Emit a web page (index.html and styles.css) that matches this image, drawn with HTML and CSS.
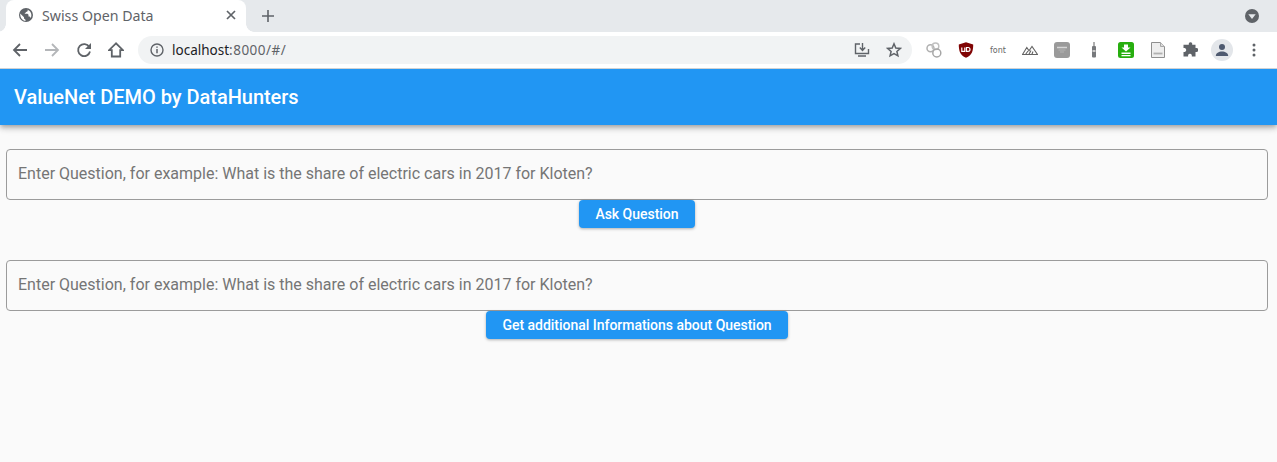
FILE: index.html
```html
<!DOCTYPE html>
<html lang="en">

<head>
    <meta charset="UTF-8">
    <title>Swiss Open Data</title>
    <link rel="stylesheet" href="styles.css">
</head>

<body>
    <div class="tabbar">
        <div class="tab">
            <svg viewBox="0 0 14 14" width="14" height="14">
                <circle cx="7" cy="7" r="7" fill="#5f6368"/>
                <path d="M1.200 5.500L5 9.200v1.300l1.500 1.200v1.200C3.500 12.500 1 10 1.200 5.500zM7.500 1.200c1 .3 1.500 1 1.200 1.800-.4.8-1.500.8-2 1.500L5.500 5.800H8.500l1 1v1.700h1.200l1 1.400C13.500 7 12 2.500 7.500 1.200z" fill="#fff"/>
            </svg>
            <span class="tab-title">Swiss Open Data</span>
            <svg class="tab-close" viewBox="0 0 10 10" width="10" height="10">
                <path d="M1 1l8 8M9 1l-8 8" stroke="#5f6368" stroke-width="1.700" fill="none"/>
            </svg>
        </div>
        <svg class="new-tab" viewBox="0 0 12 12" width="12" height="12">
            <path d="M6 0v12M0 6h12" stroke="#5f6368" stroke-width="1.600" fill="none"/>
        </svg>
        <svg class="tab-menu" viewBox="0 0 14 14" width="14" height="14">
            <circle cx="7" cy="7" r="7" fill="#5f6368"/>
            <path d="M3.300 5.300h7.400L7 10z" fill="#e6e9ec"/>
        </svg>
    </div>

    <div class="toolbar">
        <svg class="nav-icon" viewBox="0 0 16 16" width="16" height="16">
            <path d="M15 8H2M8 2L2 8l6 6" stroke="#5f6368" stroke-width="1.800" fill="none"/>
        </svg>
        <svg class="nav-icon" viewBox="0 0 16 16" width="16" height="16">
            <path d="M1 8h13M8 2l6 6-6 6" stroke="#b4b6b9" stroke-width="1.800" fill="none"/>
        </svg>
        <svg class="nav-icon" viewBox="0 0 16 16" width="16" height="16">
            <path d="M13.300 5A6 6 0 1 0 14 9.500" stroke="#5f6368" stroke-width="1.800" fill="none"/>
            <path d="M15 1v6H9z" fill="#5f6368"/>
        </svg>
        <svg class="nav-icon" viewBox="0 0 16 16" width="16" height="16">
            <path d="M8 1.300L1 8.200h2.800v6.300h8.400V8.200H15z" stroke="#5f6368" stroke-width="1.800" stroke-linejoin="miter" fill="none"/>
        </svg>

        <div class="omnibox">
            <svg viewBox="0 0 14 14" width="14" height="14">
                <circle cx="7" cy="7" r="6" stroke="#5f6368" stroke-width="1.400" fill="none"/>
                <path d="M7 6v4.300M7 3.500v1.300" stroke="#5f6368" stroke-width="1.500"/>
            </svg>
            <span class="url"><span class="url-host">localhost</span><span class="url-path">:8000/#/</span></span>
            <svg class="omni-install" viewBox="0 0 16 16" width="16" height="16">
                <path d="M6 2H1.500v9.500h13V7M8.500 1v7M5.800 5.500l2.700 3 2.700-3M4 14h8" stroke="#5f6368" stroke-width="1.400" fill="none"/>
            </svg>
            <svg viewBox="0 0 16 16" width="16" height="16">
                <path d="M8 1.800l1.800 4.200 4.500.4-3.400 3 1 4.400L8 11.500l-3.900 2.300 1-4.400-3.400-3 4.500-.4z" stroke="#5f6368" stroke-width="1.500" fill="none"/>
            </svg>
        </div>

        <div class="extensions">
            <svg viewBox="0 0 16 16" width="16" height="16">
                <circle cx="4.500" cy="6.200" r="3.500" stroke="#b0b0b0" stroke-width="1.500" fill="none"/>
                <circle cx="9.500" cy="4.300" r="3.300" stroke="#c0c0c0" stroke-width="1.500" fill="none"/>
                <circle cx="10.800" cy="11" r="4" stroke="#a6a6a6" stroke-width="1.500" fill="none"/>
            </svg>
            <svg viewBox="0 0 16 16" width="16" height="16">
                <path d="M.8 2.500L8 .3l7.200 2.200c0 6.200-1 10.700-7.200 13.200C1.800 13.200.8 8.700.8 2.500z" fill="#800404"/>
                <path d="M3.800 5.500v3.800h3V5.500M8.500 5.500v3.800h1.600a1.900 1.900 0 0 0 0-3.800z" stroke="#fff" stroke-width="1.200" fill="none"/>
            </svg>
            <span class="ext-font">font</span>
            <svg viewBox="0 0 16 16" width="16" height="16">
                <path d="M.5 12.500L4.800 5.500l2.200 3.300L10 4.500l5.500 8zM3.500 12.500L6 9M6.800 12.500L9 8.500M9.800 12.500L11 9.500" stroke="#636363" stroke-width="1.100" fill="none"/>
            </svg>
            <svg viewBox="0 0 16 16" width="16" height="16">
                <rect width="16" height="16" rx="3" fill="#9a9a9a"/>
                <path d="M3 5.500h10" stroke="#d6d6d6" stroke-width="1.500"/>
                <path d="M4.500 8h7M6 10h4" stroke="#b9b9b9" stroke-width=".8"/>
            </svg>
            <svg viewBox="0 0 16 16" width="16" height="16">
                <path d="M8 0v4" stroke="#8d8d8d" stroke-width="1.400"/>
                <rect x="6" y="4" width="4" height="11.500" rx="1" fill="#77797c"/>
                <rect x="6.500" y="8" width="3" height="2" fill="#c9c9c9"/>
            </svg>
            <svg viewBox="0 0 16 16" width="16" height="16">
                <rect width="16" height="16" rx="2.500" fill="#27ae0f"/>
                <path d="M6 2.500h4v3h2.500L8 9.500l-4.500-4H6zM3.500 10.500h9v1.500h-9zM3.500 13h9v1.300h-9z" fill="#fff"/>
            </svg>
            <svg viewBox="0 0 16 16" width="16" height="16">
                <path d="M1.500.5h9l4 4v11h-13z" fill="#eeeeee" stroke="#8f8f8f"/>
                <path d="M10.500.5v4h4" fill="#dcdcdc" stroke="#a8a8a8"/>
                <path d="M3.500 11.500h9" stroke="#b0b0b0" stroke-width="1.800"/>
            </svg>
            <svg viewBox="0 0 16 16" width="16" height="16">
                <path d="M6.800 1.500a1.800 1.800 0 0 1 3.400 0v1.300h3.300v3.300h1a1.900 1.900 0 0 1 0 3.800h-1v4.600H9.800v-1.200a1.900 1.900 0 0 0-3.700 0v1.200H1.500V10h1.200a2 2 0 0 0 0-3.900H1.500V2.800h5.300z" fill="#5f6368"/>
            </svg>
            <div class="avatar">
                <svg viewBox="0 0 14 14" width="14" height="14">
                    <circle cx="7" cy="4" r="3" fill="#4e5a70"/>
                    <path d="M.8 13c0-3 3-4.600 6.200-4.600s6.200 1.600 6.200 4.600z" fill="#4e5a70"/>
                </svg>
            </div>
            <svg viewBox="0 0 16 14" width="16" height="14">
                <circle cx="8" cy="2" r="1.500" fill="#5f6368"/>
                <circle cx="8" cy="7" r="1.500" fill="#5f6368"/>
                <circle cx="8" cy="12" r="1.500" fill="#5f6368"/>
            </svg>
        </div>
    </div>

    <header class="appbar">ValueNet DEMO by DataHunters</header>

    <main class="content">
        <section class="question">
            <input class="question-input" type="text" placeholder="Enter Question, for example: What is the share of electric cars in 2017 for Kloten?">
            <button class="but">Ask Question</button>
        </section>
        <section class="question">
            <input class="question-input" type="text" placeholder="Enter Question, for example: What is the share of electric cars in 2017 for Kloten?">
            <button class="but">Get additional Informations about Question</button>
        </section>
    </main>
</body>

</html>
```

FILE: styles.css
```css
html,
body {
    height: 100%;
    margin: 0;
    overflow: hidden;
}

body {
    display: flex;
    flex-flow: column;
    background-color: #fafafa;
    font-family: Roboto, "Liberation Sans", sans-serif;
}

svg {
    display: block;
    flex: none;
}

/* browser window */
.tabbar {
    height: 32px;
    flex: none;
    display: flex;
    align-items: center;
    padding-left: 6px;
    background-color: #e6e9ec;
}

.tab {
    position: relative;
    width: 240px;
    height: 32px;
    box-sizing: border-box;
    display: flex;
    align-items: center;
    padding: 0 10px 2px 13px;
    background-color: #fff;
    border-radius: 8px 8px 0 0;
}

/* the little curves where the tab meets the toolbar */
.tab::before,
.tab::after {
    content: "";
    position: absolute;
    bottom: 0;
    height: 8px;
}

.tab::before {
    right: 100%;
    width: 6px;
    background: radial-gradient(circle at -2px 0, #e6e9ec 7.500px, #fff 8px);
}

.tab::after {
    left: 100%;
    width: 8px;
    background: radial-gradient(circle at 100% 0, #e6e9ec 7.500px, #fff 8px);
}

.tab-title {
    flex: 1;
    margin-left: 9px;
    font-family: "Noto Sans", sans-serif;
    font-size: 14.200px;
    color: #5f6368;
}

.new-tab {
    margin-left: 16px;
}

.tab-menu {
    margin-left: auto;
    margin-right: 18px;
}

.toolbar {
    position: relative;
    height: 36px;
    flex: none;
    display: flex;
    align-items: center;
    padding-left: 12px;
    background-color: #fff;
    border-bottom: 1px solid #cfd1d3;
}

.nav-icon {
    margin-right: 16px;
}

.omnibox {
    width: 774px;
    height: 28px;
    box-sizing: border-box;
    display: flex;
    align-items: center;
    margin-left: -2px;
    padding: 0 10px 0 12px;
    background-color: #f1f3f4;
    border-radius: 14px;
}

.url {
    flex: 1;
    margin-left: 8px;
    font-family: "Noto Sans", sans-serif;
    font-size: 13.500px;
    color: #5f6368;
}

.url-host {
    color: #202124;
}

.url-path {
    letter-spacing: 0.500px;
}

.omni-install {
    margin-right: 16px;
}

.extensions {
    display: flex;
    align-items: center;
    gap: 16px;
    margin-left: 14px;
}

.ext-font {
    width: 16px;
    font-family: "DejaVu Sans", sans-serif;
    font-size: 8px;
    text-align: center;
    color: #666;
}

.avatar {
    width: 22px;
    height: 22px;
    display: flex;
    justify-content: center;
    align-items: center;
    margin: 0 -3px;
    border-radius: 50%;
    background-color: #e3e6ea;
}

/* page */
.appbar {
    height: 56px;
    flex: none;
    display: flex;
    align-items: center;
    padding-left: 14px;
    font-size: 20px;
    font-weight: 500;
    letter-spacing: -0.040px;
    color: #fff;
    background-color: #2196f3;
    box-shadow: 0 2px 4px -1px rgba(0, 0, 0, 0.2), 0 4px 5px 0 rgba(0, 0, 0, 0.14), 0 1px 10px 0 rgba(0, 0, 0, 0.12);
}

.content {
    display: flex;
    flex-flow: column;
    gap: 32px;
    padding: 24px 9px 0 6px;
}

.question {
    display: flex;
    flex-flow: column;
    align-items: center;
}

.question-input {
    width: 100%;
    height: 51px;
    box-sizing: border-box;
    padding: 0 11px 2px;
    background-color: transparent;
    border: 1px solid #9b9b9b;
    border-radius: 4px;
    font-family: inherit;
    font-size: 16px;
    color: #333;
}

.question-input::placeholder {
    color: #757575;
    opacity: 1;
}

.but {
    height: 28px;
    padding: 0 16px;
    background-color: #2196f3;
    border: none;
    border-radius: 4px;
    font-family: inherit;
    font-size: 14px;
    font-weight: 500;
    letter-spacing: -0.020px;
    color: #fff;
    box-shadow: 0 1px 3px rgba(0, 0, 0, 0.3);
}
```
